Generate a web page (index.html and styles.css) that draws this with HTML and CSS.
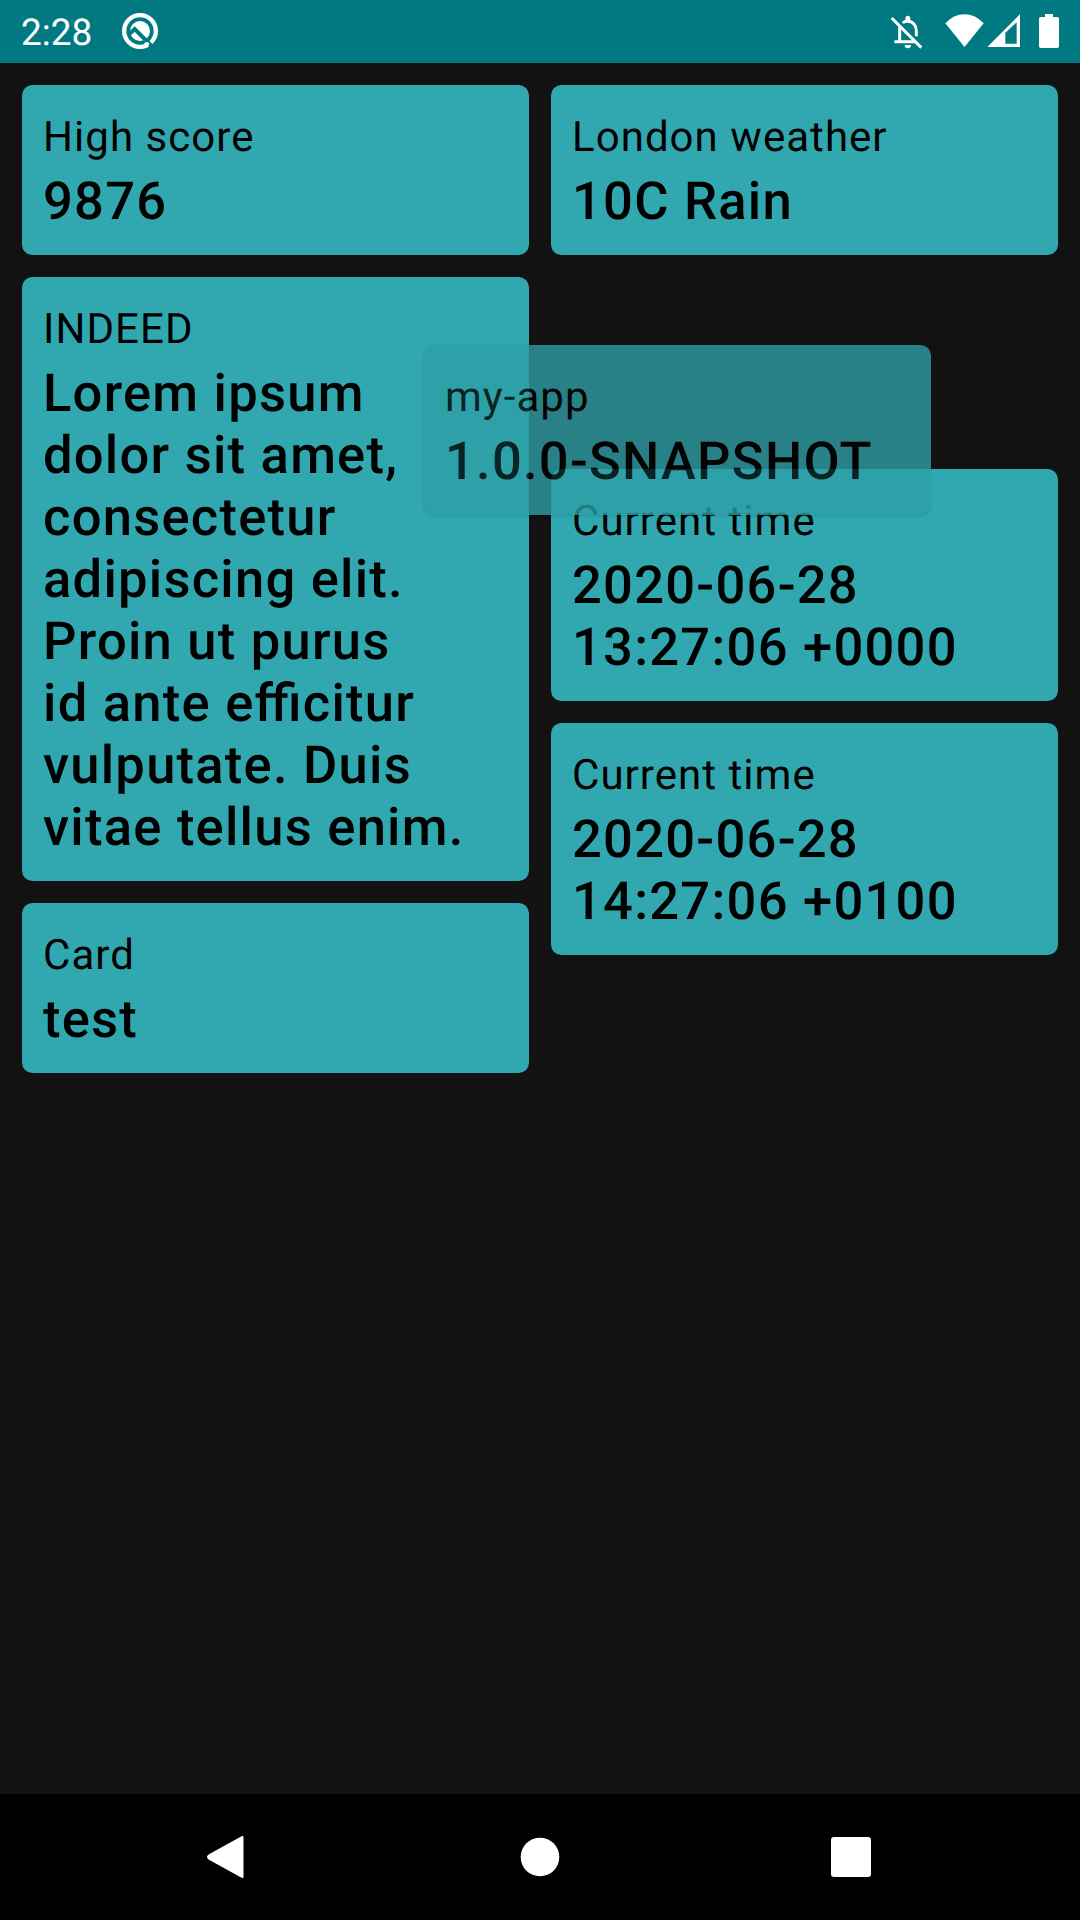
FILE: index.html
```html
<!DOCTYPE html>
<html lang="en">
<head>
<meta charset="utf-8">
<title>Dashboard</title>
<link rel="stylesheet" href="styles.css">
</head>
<body>
<div class="screen">
  <header class="status-bar">
    <span class="clock">2:28</span>
    <svg class="icon-q" width="38" height="38" viewBox="363 37 114 114">
      <circle cx="420" cy="94" r="47.5" fill="none" stroke="#fff" stroke-width="13"/>
      <circle cx="420" cy="94" r="30" fill="#fff"/>
      <path d="M387 104L404 88L463 147" fill="none" stroke="#007a80" stroke-width="12"/>
      <path d="M432 129L443 127L449 133L441 140Z" fill="#fff"/>
    </svg>
    <span class="spacer"></span>
    <svg class="icon-bell" width="34" height="36" viewBox="89 41 102 108">
      <path d="M127 68C131 64 135 63 142 63C157 63 168 75 168 91V108M118 79V124" fill="none" stroke="#fff" stroke-width="9"/>
      <path d="M135 63V54A7.500 7.500 0 0 1 150 54V63ZM102 120H170V129H102ZM133 134H152A9.500 10 0 0 1 133 134Z" fill="#fff"/>
      <path d="M99 50L190 141" stroke="#007a80" stroke-width="9"/>
      <path d="M94 53L183 142" stroke="#fff" stroke-width="9"/>
    </svg>
    <svg class="icon-wifi" width="39" height="33" viewBox="255 41 117 99">
      <path d="M256 69Q281 42 313.500 42Q346 42 371 69L313.500 140Z" fill="#fff"/>
    </svg>
    <svg class="icon-signal" width="33" height="33" viewBox="381 42 99 99">
      <path fill-rule="evenodd" d="M382 141L480 43V141ZM436 98V131H470V67Z" fill="#fff"/>
    </svg>
    <svg class="icon-battery" width="20" height="34" viewBox="537 42 60 102">
      <path d="M555 42H579V51H592Q597 51 597 56V139Q597 144 592 144H542Q537 144 537 139V56Q537 51 542 51H555Z" fill="#fff"/>
    </svg>
  </header>

  <main class="board">
    <div class="column">
      <section class="card"><h2 class="title">High score</h2><p class="value">9876</p></section>
      <section class="card"><h2 class="title">INDEED</h2><p class="value">Lorem ipsum<br>dolor sit amet,<br>consectetur<br>adipiscing elit.<br>Proin ut purus<br>id ante efficitur<br>vulputate. Duis<br>vitae tellus enim.</p></section>
      <section class="card"><h2 class="title">Card</h2><p class="value">test</p></section>
    </div>
    <div class="column">
      <section class="card"><h2 class="title">London weather</h2><p class="value">10C Rain</p></section>
      <div class="slot">
        <section class="card dragged"><h2 class="title">my-app</h2><p class="value">1.0.0-SNAPSHOT</p></section>
      </div>
      <section class="card"><h2 class="title">Current time</h2><p class="value">2020-06-28<br>13:27:06 +0000</p></section>
      <section class="card"><h2 class="title">Current time</h2><p class="value">2020-06-28<br>14:27:06 +0100</p></section>
    </div>
  </main>

  <nav class="nav-bar">
    <svg width="44" height="46" viewBox="0 0 44 46"><path d="M4 21.500L37.500 3V43L4 24.500Q2 23 4 21.500Z" fill="#fff" stroke="#fff" stroke-width="2" stroke-linejoin="round"/></svg>
    <svg width="40" height="40" viewBox="0 0 40 40"><circle cx="20" cy="20" r="19.300" fill="#fff"/></svg>
    <svg width="40" height="40" viewBox="0 0 40 40"><rect width="40" height="40" rx="3" fill="#fff"/></svg>
  </nav>
</div>
</body>
</html>
```
FILE: styles.css
```css
* { box-sizing: border-box; }

body {
  margin: 0;
  background: #121212;
  color: #000;
  font-family: Roboto, sans-serif;
  text-rendering: geometricPrecision;
}

.screen {
  display: flex;
  flex-direction: column;
  width: 1080px;
  height: 1920px;
  overflow: hidden;
}

.status-bar {
  display: flex;
  align-items: flex-start;
  height: 63px;
  padding: 0 21px;
  background: #007a80;
  color: #fff;
}

.clock {
  width: 71px;
  margin-top: 12px;
  font-size: 37px;
  line-height: 44px;
}

.spacer { flex: 1; }
.icon-q { margin: 12px 0 0 29px; }
.icon-bell { margin-top: 14px; }
.icon-wifi { margin: 14px 0 0 21px; }
.icon-signal { margin: 14px 0 0 3px; }
.icon-battery { margin: 14px 0 0 19px; }

.board {
  flex: 1;
  display: grid;
  grid-template-columns: 1fr 1fr;
  gap: 22px;
  padding: 22px;
}

.column {
  display: flex;
  flex-direction: column;
  gap: 22px;
}

.card {
  padding: 28px 21px 23px;
  border-radius: 10.5px;
  background: #31a8af;
}

.title {
  margin: 0 0 8px;
  font-size: 42px;
  font-weight: 400;
  line-height: 49px;
  letter-spacing: 1.04px;
}

.value {
  margin: 0;
  font-size: 52.5px;
  font-weight: 500;
  line-height: 62px;
  letter-spacing: 1.25px;
  font-feature-settings: "liga" 1;
  white-space: nowrap;
}

.slot {
  position: relative;
  height: 170px;
}

.dragged {
  position: absolute;
  z-index: 1;
  top: 68px;
  left: -127px;
  width: 507px;
  background: #2e9fa6;
  box-shadow: 0 1px 3px rgba(0, 0, 0, 0.18);
  opacity: 0.79;
}

.nav-bar {
  display: flex;
  align-items: center;
  justify-content: space-between;
  height: 126px;
  padding: 0 209px 0 205px;
  background: #000;
}
```
